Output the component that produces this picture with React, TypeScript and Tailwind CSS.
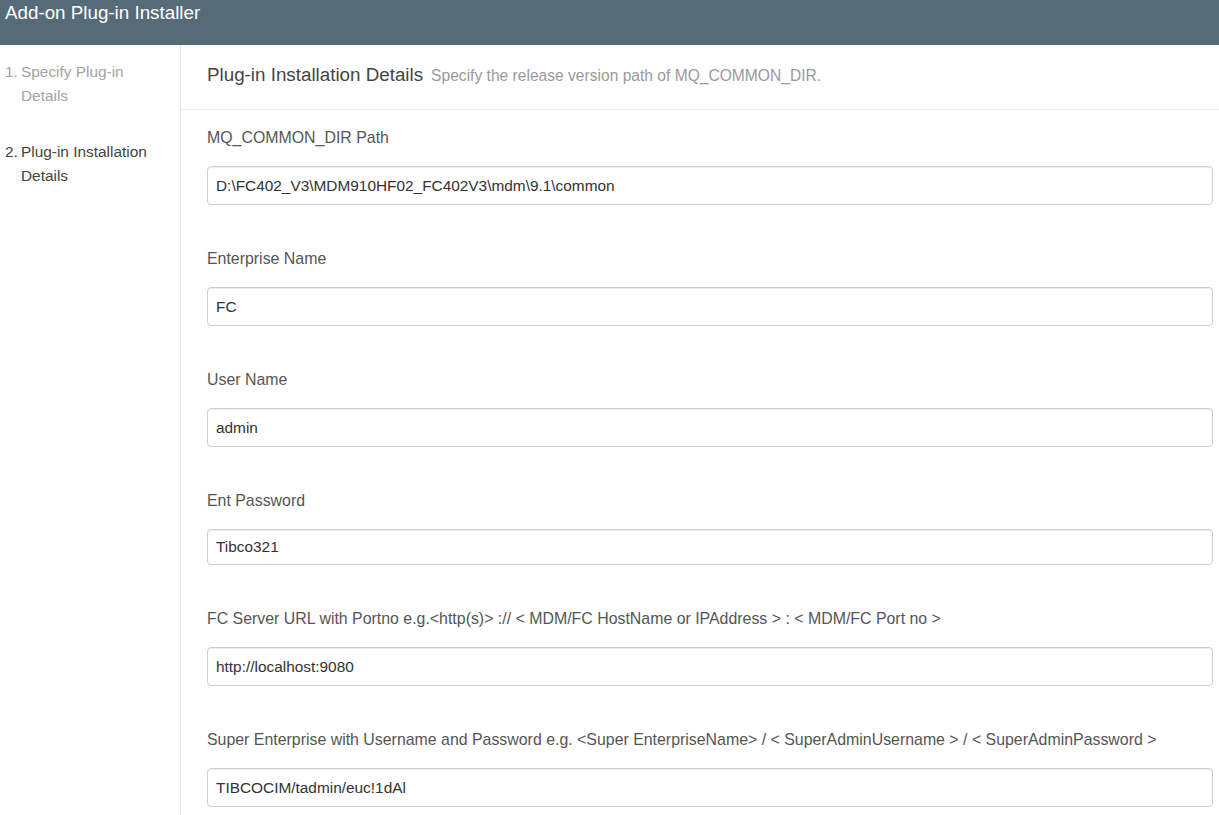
import React from 'react'

interface Field {
  label: string;
  value: string;
  tall?: boolean;
}

const fields: Field[] = [
  { label: 'MQ_COMMON_DIR Path', value: 'D:\\FC402_V3\\MDM910HF02_FC402V3\\mdm\\9.1\\common', tall: true },
  { label: 'Enterprise Name', value: 'FC', tall: true },
  { label: 'User Name', value: 'admin', tall: true },
  { label: 'Ent Password', value: 'Tibco321', tall: false },
  {
    label: 'FC Server URL with Portno e.g.<http(s)> :// < MDM/FC HostName or IPAddress > : < MDM/FC Port no >',
    value: 'http://localhost:9080',
    tall: true,
  },
  {
    label:
      'Super Enterprise with Username and Password e.g. <Super EnterpriseName> / < SuperAdminUsername > / < SuperAdminPassword >',
    value: 'TIBCOCIM/tadmin/euc!1dAl',
    tall: true,
  },
]

const steps = [
  { num: '1.', text: 'Specify Plug-in Details', active: false },
  { num: '2.', text: 'Plug-in Installation Details', active: true },
]

export default function App() {
  return (
    <div className="min-h-screen flex flex-col bg-white font-['Liberation_Sans',Arial,sans-serif]">
      <div className="h-[45px] shrink-0 bg-[#566b78] pl-[5px] pt-[2px] text-[18.8px] leading-[22px] text-white">
        Add-on Plug-in Installer
      </div>

      <div className="flex flex-1">
        {/* wizard steps */}
        <div className="w-[181px] shrink-0 border-r border-[#e6e6e6] pl-[5px] pr-[12px] pt-[15px]">
          <div className="flex flex-col gap-[32px]">
            {steps.map((step) => (
              <div
                key={step.num}
                className={`flex text-[15.4px] leading-[24px] ${step.active ? 'text-[#444]' : 'text-[#a3a3a3]'}`}
              >
                <span className="w-[16px] shrink-0">{step.num}</span>
                <span>{step.text}</span>
              </div>
            ))}
          </div>
        </div>

        {/* form */}
        <div className="flex-1 min-w-0">
          <div className="h-[65px] border-b border-[#ebebeb] pl-[26px] pt-[16px] leading-[27px]">
            <span className="text-[18.8px] text-[#444]">Plug-in Installation Details</span>
            <span className="ml-[8px] text-[15.6px] text-[#9a9a9a]">
              Specify the release version path of MQ_COMMON_DIR.
            </span>
          </div>

          <div className="pl-[26px] pr-[6px] pt-[17px]">
            {fields.map((field, i) => (
              <div key={field.label} className={i === 0 ? '' : 'mt-[43px]'}>
                <div className="mb-[17px] text-[15.9px] leading-[22px] text-[#555]">{field.label}</div>
                <input
                  readOnly
                  value={field.value}
                  className={`block w-full rounded-[4px] border border-[#cfcfcf] bg-white px-[8px] text-[15.4px] text-[#333] shadow-[inset_0_1px_1px_rgba(0,0,0,0.075)] outline-none ${field.tall ? 'h-[39px]' : 'h-[36px]'}`}
                />
              </div>
            ))}
          </div>
        </div>
      </div>
    </div>
  )
}
